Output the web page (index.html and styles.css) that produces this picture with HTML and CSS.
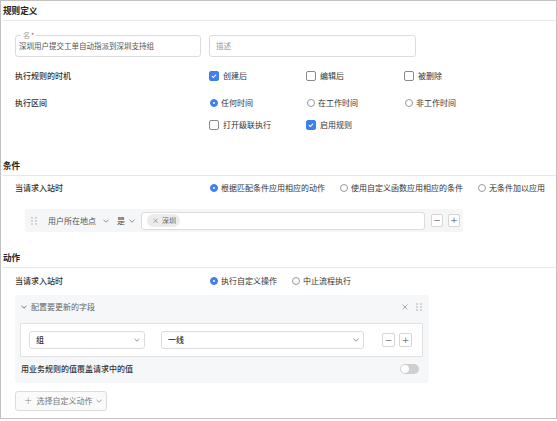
FILE: index.html
```html
<!DOCTYPE html>
<html lang="zh-CN">
<head>
<meta charset="utf-8">
<title>规则定义</title>
<link rel="stylesheet" href="styles.css">
</head>
<body>
<div class="frame">
  <div class="sec-head">规则定义</div>
  <div class="sec-body">
    <div class="fields">
      <div class="field name">
        <span class="legend">名<i class="req">*</i></span>
        <span class="val">深圳用户提交工单自动指派到深圳支持组</span>
      </div>
      <div class="field desc"><span class="ph">描述</span></div>
    </div>

    <div class="row r1">
      <div class="lbl">执行规则的时机</div>
      <div class="opt"><span class="cb on"><svg viewBox="0 0 10 10"><polyline points="2.4,5.1 4.2,6.9 7.6,3.2"/></svg></span>创建后</div>
      <div class="opt"><span class="cb"></span>编辑后</div>
      <div class="opt"><span class="cb"></span>被删除</div>
    </div>

    <div class="row r2">
      <div class="lbl">执行区间</div>
      <div class="opt"><span class="rd on"></span>任何时间</div>
      <div class="opt"><span class="rd"></span>在工作时间</div>
      <div class="opt"><span class="rd"></span>非工作时间</div>
    </div>

    <div class="row r3">
      <div class="lbl"></div>
      <div class="opt"><span class="cb"></span>打开级联执行</div>
      <div class="opt"><span class="cb on"><svg viewBox="0 0 10 10"><polyline points="2.4,5.1 4.2,6.9 7.6,3.2"/></svg></span>启用规则</div>
    </div>
  </div>

  <div class="sec-head s2">条件</div>
  <div class="sec-body">
    <div class="row inline r4">
      <div class="lbl">当请求入站时</div>
      <div class="opts">
        <div class="opt"><span class="rd on"></span>根据匹配条件应用相应的动作</div>
        <div class="opt"><span class="rd"></span>使用自定义函数应用相应的条件</div>
        <div class="opt"><span class="rd"></span>无条件加以应用</div>
      </div>
    </div>

    <div class="cond">
      <span class="drag"><i></i><i></i><i></i><i></i><i></i><i></i></span>
      <span class="ctext c-field">用户所在地点</span>
      <svg class="chev c1" viewBox="0 0 6 4"><polyline points="0.5,0.8 3,3.2 5.5,0.8"/></svg>
      <span class="ctext c-op">是</span>
      <svg class="chev c2" viewBox="0 0 6 4"><polyline points="0.5,0.8 3,3.2 5.5,0.8"/></svg>
      <div class="cinput"><span class="tag"><span class="tx">×</span>深圳</span></div>
      <span class="sbtn">−</span>
      <span class="sbtn">+</span>
    </div>
  </div>

  <div class="sec-head s3">动作</div>
  <div class="sec-body">
    <div class="row inline r5">
      <div class="lbl">当请求入站时</div>
      <div class="opts">
        <div class="opt"><span class="rd on"></span>执行自定义操作</div>
        <div class="opt"><span class="rd"></span>中止流程执行</div>
      </div>
    </div>

    <div class="panel">
      <div class="panel-head">
        <svg class="chev ph-chev" viewBox="0 0 6 4"><polyline points="0.5,0.8 3,3.2 5.5,0.8"/></svg>
        <span class="ptitle">配置要更新的字段</span>
        <span class="spacer"></span>
        <svg class="close" viewBox="0 0 6 6"><path d="M0.6 0.6 L5.4 5.4 M5.4 0.6 L0.6 5.4"/></svg>
        <span class="drag small"><i></i><i></i><i></i><i></i><i></i><i></i></span>
      </div>
      <div class="inner">
        <div class="sel s-a"><span>组</span><svg class="chev" viewBox="0 0 6 4"><polyline points="0.5,0.8 3,3.2 5.5,0.8"/></svg></div>
        <div class="sel s-b"><span>一线</span><svg class="chev" viewBox="0 0 6 4"><polyline points="0.5,0.8 3,3.2 5.5,0.8"/></svg></div>
        <span class="sbtn b2">−</span>
        <span class="sbtn b2">+</span>
      </div>
      <div class="override">
        <span class="otext">用业务规则的值覆盖请求中的值</span>
        <span class="toggle"><i></i></span>
      </div>
    </div>

    <div class="addbtn">
      <span class="plus">+</span>
      <span>选择自定义动作</span>
      <svg class="chev" viewBox="0 0 6 4"><polyline points="0.5,0.8 3,3.2 5.5,0.8"/></svg>
    </div>
  </div>
</div>
</body>
</html>
```

FILE: styles.css
```css
* { box-sizing: border-box; }
html, body { margin: 0; padding: 0; background: #fff; }
body {
  font-family: "Noto Sans CJK SC", "Noto Sans", sans-serif;
  font-size: 8px;
  color: #333;
}
.frame {
  width: 557px;
  height: 419px;
  border: 1px solid #c2c2c2;
  overflow: hidden;
}
.sec-head {
  margin-left: 2px;
  height: 20px;
  border-bottom: 1px solid #e8e8e8;
  display: flex;
  align-items: center;
  font-size: 8.6px;
  font-weight: 700;
  color: #222;
  line-height: 1;
}
.sec-head.s2 { margin-top: 21px; }
.sec-head.s3 { margin-top: 16px; }
.sec-body { padding-left: 14px; }

.fields { display: flex; gap: 8px; margin-top: 14px; }
.field {
  position: relative;
  height: 22px;
  border: 1px solid #dcdcdc;
  border-radius: 3px;
  display: flex;
  align-items: center;
  line-height: 1;
}
.field.name { width: 186px; padding-left: 3px; }
.field.desc { width: 207px; padding-left: 6px; }
.val { font-size: 7.5px; color: #555; }
.ph { font-size: 7.5px; color: #9a9a9a; }
.legend {
  position: absolute;
  left: 5px;
  top: -5px;
  padding: 0 2px;
  background: #fff;
  font-size: 7px;
  color: #999;
  line-height: 8px;
}
.req { font-style: normal; color: #e53935; margin-left: 1px; }

.row {
  display: grid;
  grid-template-columns: 194px 97px 98px 1fr;
  height: 20px;
  align-items: center;
  line-height: 1;
}
.row.inline { grid-template-columns: 194px 1fr; }
.r1 { margin-top: 9px; }
.r2 { margin-top: 7px; }
.r3 { margin-top: 2px; }
.r4 { margin-top: 2px; }
.r5 { margin-top: 3px; }
.lbl { font-weight: 500; color: #333; }
.opts { display: flex; gap: 14px; align-items: center; }
.opt { display: flex; align-items: center; color: #333; white-space: nowrap; }

.cb {
  width: 10px;
  height: 10px;
  border: 1px solid #8a8a8a;
  border-radius: 2px;
  margin-right: 4px;
  background: #fff;
  display: flex;
}
.cb.on { background: #3f7ff0; border-color: #3f7ff0; }
.cb svg { width: 8px; height: 8px; fill: none; stroke: #fff; stroke-width: 1.3; }
.rd {
  width: 8px;
  height: 8px;
  border: 1px solid #9a9a9a;
  border-radius: 50%;
  margin-left: 1px;
  margin-right: 3px;
  background: #fff;
  position: relative;
}
.rd.on { background: #3f7ff0; border-color: #3f7ff0; }
.rd.on::after {
  content: "";
  position: absolute;
  left: 2px; top: 2px;
  width: 2px; height: 2px;
  border-radius: 50%;
  background: #fff;
}

.cond {
  margin-top: 11px;
  margin-left: 10px;
  width: 438px;
  height: 23px;
  background: #f5f6f8;
  border-radius: 2px;
  display: flex;
  align-items: center;
  padding-left: 6px;
  line-height: 1;
}
.drag {
  display: grid;
  grid-template-columns: 2px 2px;
  gap: 1px 2px;
  width: 6px;
}
.drag i { display: block; width: 2px; height: 2px; border-radius: 50%; background: #c9c9c9; }
.c-field { margin-left: 11px; color: #555; }
.chev { width: 6px; height: 4px; fill: none; stroke: #888; stroke-width: 0.9; }
.c1 { margin-left: 7px; }
.c-op { margin-left: 8px; color: #444; }
.c2 { margin-left: 4px; }
.cinput {
  margin-left: 6px;
  width: 284px;
  height: 18px;
  background: #fff;
  border: 1px solid #dcdcdc;
  border-radius: 3px;
  display: flex;
  align-items: center;
  padding-left: 5px;
}
.tag {
  display: flex;
  align-items: center;
  height: 13px;
  padding: 0 4px 0 5px;
  border-radius: 7px;
  background: #ececec;
  font-size: 7px;
  color: #666;
}
.tag .tx { margin-right: 3px; color: #777; font-size: 7px; }
.sbtn {
  width: 12px;
  height: 13px;
  border: 1px solid #d6d6d6;
  border-radius: 2px;
  background: #fff;
  display: flex;
  align-items: center;
  justify-content: center;
  color: #777;
  font-size: 9px;
  font-family: "DejaVu Sans", sans-serif;
  line-height: 1;
  margin-left: 6px;
}
.cond .sbtn:first-of-type { margin-left: 7px; }
.cond .sbtn + .sbtn { margin-left: 5px; }

.panel {
  margin-top: 4px;
  width: 414px;
  height: 88px;
  background: #f6f7f9;
  border-radius: 3px;
  padding: 0 6px 0 5px;
}
.panel-head {
  height: 28px;
  display: flex;
  align-items: center;
  padding-left: 1px;
  padding-bottom: 4px;
  line-height: 1;
}
.ph-chev { margin-right: 4px; stroke: #666; }
.ptitle { color: #666; }
.spacer { flex: 1; }
.close { width: 6px; height: 6px; fill: none; stroke: #aaa; stroke-width: 1; margin-right: 8px; }
.drag.small { margin-right: 1px; }
.inner {
  height: 34px;
  background: #fff;
  border: 1px solid #e2e2e2;
  display: flex;
  align-items: center;
  padding-left: 8px;
  line-height: 1;
}
.sel {
  height: 18px;
  border: 1px solid #dcdcdc;
  border-radius: 3px;
  display: flex;
  align-items: center;
  justify-content: space-between;
  padding: 0 4px 0 6px;
  background: #fff;
  color: #333;
  font-weight: 500;
}
.s-a { width: 116px; }
.s-b { width: 203px; margin-left: 16px; }
.b2 { width: 13px; height: 14px; }
.inner .b2:first-of-type { margin-left: 18px; }
.inner .b2 + .b2 { margin-left: 4px; }
.override {
  height: 26px;
  display: flex;
  align-items: center;
  justify-content: space-between;
  padding-left: 1px;
  padding-right: 4px;
  padding-bottom: 2px;
  line-height: 1;
}
.otext { color: #333; font-weight: 500; }
.toggle {
  width: 19px;
  height: 10px;
  border-radius: 5px;
  background: #cfcfcf;
  position: relative;
}
.toggle i {
  position: absolute;
  left: 1px; top: 1px;
  width: 8px; height: 8px;
  border-radius: 50%;
  background: #fff;
}
.addbtn {
  margin-top: 8px;
  width: 92px;
  height: 20px;
  border: 1px solid #dcdcdc;
  border-radius: 3px;
  background: #fafafa;
  display: flex;
  align-items: center;
  padding-left: 8px;
  color: #777;
  line-height: 1;
}
.plus { font-family: "DejaVu Sans", sans-serif; font-size: 10px; color: #888; margin-right: 4px; font-weight: 300; }
.addbtn .chev { margin-left: 4px; stroke: #999; }
```
